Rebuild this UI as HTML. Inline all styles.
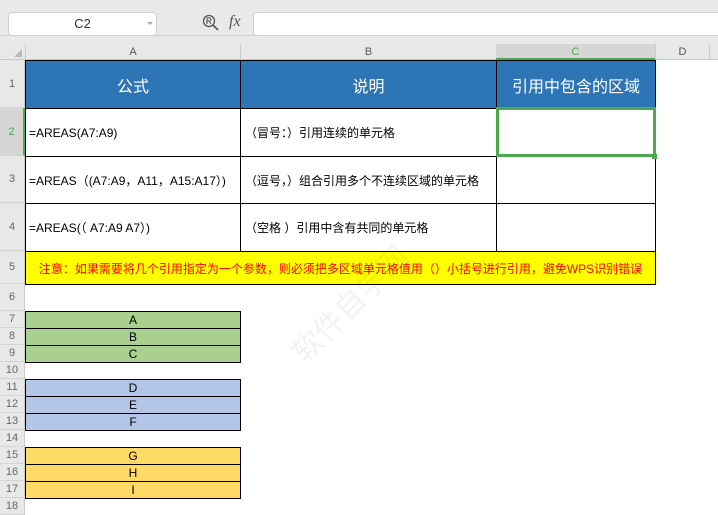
<!DOCTYPE html>
<html><head><meta charset="utf-8"><style>
*{margin:0;padding:0;box-sizing:border-box}
body{width:718px;height:511px;overflow:hidden;background:#fff;position:relative;font-family:"Liberation Sans","Noto Sans CJK SC",sans-serif;}
.a{position:absolute}
.rh{position:absolute;left:0;width:25px;background:#e8e8e8;color:#666;font-size:11px;text-align:center;border-bottom:1px solid #d4d4d4;border-right:1px solid #ccc;display:flex;align-items:center;justify-content:center}
.c{position:absolute;border:1px solid #000;display:flex;align-items:center;font-size:12px;color:#000;white-space:nowrap;overflow:hidden}
.hd{background:#2e75b6;color:#fff;font-size:16px;justify-content:center}
.cen{justify-content:center}
</style></head><body>
<div class="a" style="left:0;top:0;width:718px;height:44px;background:#e9e9e9"></div>
<div class="a" style="left:8px;top:12px;width:149px;height:24px;background:#fff;border:1px solid #d0d0d0;border-radius:4px;font-size:13px;color:#333;text-align:center;line-height:22px">C2</div>
<div class="a" style="left:147px;top:22px;border-left:3px solid transparent;border-right:3px solid transparent;border-top:3px solid #aaa"></div>
<svg class="a" style="left:202px;top:14px" width="18" height="18" viewBox="0 0 18 18"><circle cx="7" cy="7" r="5.5" fill="none" stroke="#555" stroke-width="1.3"/><path d="M11 11l5 5" stroke="#555" stroke-width="1.6"/><path d="M5 10V4h2.5a1.5 1.5 0 010 3H5M7 7l2 3" fill="none" stroke="#555" stroke-width="1"/></svg>
<div class="a" style="left:229px;top:13px;font-family:'Liberation Serif',serif;font-style:italic;font-size:16px;color:#555">fx</div>
<div class="a" style="left:253px;top:12px;width:470px;height:24px;background:#fff;border:1px solid #d0d0d0;border-radius:4px"></div>
<div class="a" style="left:0;top:35px;width:718px;height:1px;background:#d0d0d0"></div>
<div class="a" style="left:0;top:44px;width:718px;height:16px;background:#e8e8e8;border-bottom:1px solid #c8c8c8"></div>
<div class="a" style="left:14px;top:49px;border-left:8px solid transparent;border-bottom:8px solid #b8b8b8"></div>
<div class="a" style="left:25px;top:44px;width:215px;height:16px;border-left:1px solid #ccc;font-size:11px;color:#555;text-align:center;line-height:16px">A</div>
<div class="a" style="left:240px;top:44px;width:256px;height:16px;border-left:1px solid #ccc;font-size:11px;color:#555;text-align:center;line-height:16px">B</div>
<div class="a" style="left:496px;top:44px;width:159px;height:16px;background:#d6d6d6;border-bottom:2px solid #4ea84e;font-size:11px;color:#4ea84e;text-align:center;line-height:16px">C</div>
<div class="a" style="left:655px;top:44px;width:55px;height:16px;border-left:1px solid #ccc;border-right:1px solid #ccc;font-size:11px;color:#555;text-align:center;line-height:16px">D</div>
<div class="a" style="left:0;top:60px;width:25px;height:451px;background:#e8e8e8"></div>
<div class="rh" style="top:60px;height:48px">1</div>
<div class="rh" style="top:108px;height:48px;background:#d6d6d6;color:#4ea84e;border-right:2px solid #4ea84e">2</div>
<div class="rh" style="top:156px;height:47px">3</div>
<div class="rh" style="top:203px;height:48px">4</div>
<div class="rh" style="top:251px;height:33px">5</div>
<div class="rh" style="top:284px;height:27px">6</div>
<div class="rh" style="top:311px;height:17px">7</div>
<div class="rh" style="top:328px;height:17px">8</div>
<div class="rh" style="top:345px;height:17px">9</div>
<div class="rh" style="top:362px;height:17px">10</div>
<div class="rh" style="top:379px;height:17px">11</div>
<div class="rh" style="top:396px;height:17px">12</div>
<div class="rh" style="top:413px;height:17px">13</div>
<div class="rh" style="top:430px;height:17px">14</div>
<div class="rh" style="top:447px;height:17px">15</div>
<div class="rh" style="top:464px;height:17px">16</div>
<div class="rh" style="top:481px;height:17px">17</div>
<div class="rh" style="top:498px;height:17px">18</div>
<div class="c hd" style="left:25px;top:60px;width:216px;height:49px">公式</div>
<div class="c hd" style="left:240px;top:60px;width:257px;height:49px">说明</div>
<div class="c hd" style="left:496px;top:60px;width:160px;height:49px">引用中包含的区域</div>
<div class="c" style="left:25px;top:108px;width:216px;height:49px;padding-left:3px">=AREAS(A7:A9)</div>
<div class="c" style="left:240px;top:108px;width:257px;height:49px;padding-left:4px">（冒号：）引用连续的单元格</div>
<div class="c" style="left:496px;top:108px;width:160px;height:49px"></div>
<div class="c" style="left:25px;top:156px;width:216px;height:48px;padding-left:3px">=AREAS（(A7:A9，A11，A15:A17）)</div>
<div class="c" style="left:240px;top:156px;width:257px;height:48px;padding-left:4px">（逗号，）组合引用多个不连续区域的单元格</div>
<div class="c" style="left:496px;top:156px;width:160px;height:48px"></div>
<div class="c" style="left:25px;top:203px;width:216px;height:49px;padding-left:3px">=AREAS(（ A7:A9 A7）)</div>
<div class="c" style="left:240px;top:203px;width:257px;height:49px;padding-left:4px">（空格 ）引用中含有共同的单元格</div>
<div class="c" style="left:496px;top:203px;width:160px;height:49px"></div>
<div class="a" style="left:496px;top:107px;width:160px;height:50px;border:3px solid #4ea84e"></div>
<div class="a" style="left:652px;top:154px;width:5px;height:5px;background:#4ea84e"></div>
<div class="c cen" style="left:25px;top:251px;width:631px;height:34px;background:#ffff00;color:#f00;font-size:12px">注意：如果需要将几个引用指定为一个参数，则必须把多区域单元格值用（）小括号进行引用，避免WPS识别错误</div>
<div class="c cen" style="left:25px;top:311px;width:216px;height:18px;background:#a9d08e">A</div>
<div class="c cen" style="left:25px;top:328px;width:216px;height:18px;background:#a9d08e">B</div>
<div class="c cen" style="left:25px;top:345px;width:216px;height:18px;background:#a9d08e">C</div>
<div class="c cen" style="left:25px;top:379px;width:216px;height:18px;background:#b4c6e7">D</div>
<div class="c cen" style="left:25px;top:396px;width:216px;height:18px;background:#b4c6e7">E</div>
<div class="c cen" style="left:25px;top:413px;width:216px;height:18px;background:#b4c6e7">F</div>
<div class="c cen" style="left:25px;top:447px;width:216px;height:18px;background:#ffd966">G</div>
<div class="c cen" style="left:25px;top:464px;width:216px;height:18px;background:#ffd966">H</div>
<div class="c cen" style="left:25px;top:481px;width:216px;height:18px;background:#ffd966">I</div>
<div class="a" style="left:280px;top:340px;font-size:30px;color:rgba(0,0,0,0.05);transform:rotate(-45deg);transform-origin:left top;white-space:nowrap">软件自学网</div>
</body></html>
